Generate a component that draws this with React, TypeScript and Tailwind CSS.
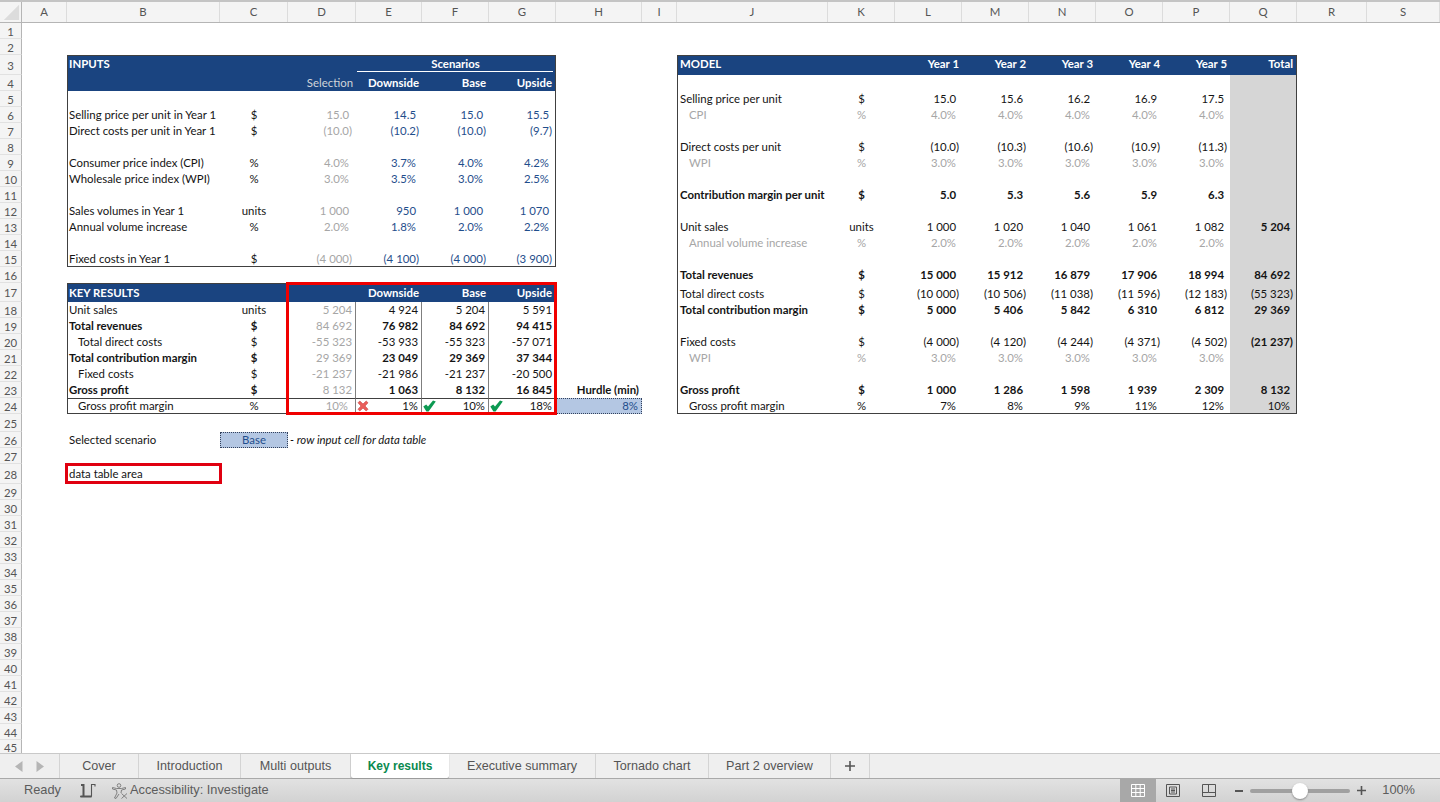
import React from 'react';

type Spec = { t?: string; c?: string; icon?: 'x' | 'check' };
type RowCells = Record<string, Spec>;

const COLS = ['A', 'B', 'C', 'D', 'E', 'F', 'G', 'H', 'I', 'J', 'K', 'L', 'M', 'N', 'O', 'P', 'Q', 'R', 'S'];
const GRID = 'grid grid-cols-[22px_45px_153px_68px_68px_66px_67px_67px_86px_35px_151px_67px_67px_67px_67px_67px_67px_67px_70px_73px]';

const HEIGHTS: Record<number, string> = { 3: 'h-[20px]', 17: 'h-[19px]', 25: 'h-[18px]', 28: 'h-[20px]', 45: 'h-[13px]' };

const HEAD = 'bg-[#1a4480] text-white font-bold';
const GREY = 'text-[#a6a6a6]';
const BLUE = 'text-[#1f4e8c]';
const BOLD = 'font-bold';

const lab = (t: string, c = ''): Spec => ({ t, c: `justify-start pl-[1px] ${c}` });
const labJ = (t: string, c = ''): Spec => ({ t, c: `justify-start pl-[2px] ${c}` });
const free = (t: string, c = ''): Spec => ({ t, c: `justify-start pl-[2px] ${c}` });
const ind = (t: string, c = ''): Spec => ({ t, c: `justify-start pl-[10px] ${c}` });
const indJ = (t: string, c = ''): Spec => ({ t, c: `justify-start pl-[11px] ${c}` });
const mid = (t: string, c = ''): Spec => ({ t, c: `justify-center ${c}` });
// right aligned, flush with the cell edge
const num = (t: string, c = ''): Spec => ({ t, c: `justify-end pr-[3px] ${c}` });
// right aligned, leaves room for a closing bracket like the excel number format
const fmt = (t: string, c = ''): Spec => ({ t, c: `justify-end ${t.endsWith(')') ? 'pr-[3px]' : 'pr-[6px]'} ${c}` });
const fmtD = (t: string, c = ''): Spec => ({ t, c: `justify-end ${t.endsWith(')') ? 'pr-[4px]' : 'pr-[7px]'} ${c}` });

const years = (vals: string[], c = '') => ({
  L: fmt(vals[0], c),
  M: fmt(vals[1], c),
  N: fmt(vals[2], c),
  O: fmt(vals[3], c),
  P: fmt(vals[4], c),
});

const inputRow = (label: string, unit: string, vals: string[]): RowCells => ({
  B: lab(label),
  C: mid(unit),
  D: fmtD(vals[0], GREY),
  E: fmt(vals[1], BLUE),
  F: fmt(vals[2], BLUE),
  G: fmt(vals[3], BLUE),
});

const resultRow = (label: Spec, unit: string, vals: string[], bold = false): RowCells => ({
  B: label,
  C: mid(unit, bold ? BOLD : ''),
  D: num(vals[0], GREY),
  E: num(vals[1], bold ? BOLD : ''),
  F: num(vals[2], bold ? BOLD : ''),
  G: num(vals[3], bold ? BOLD : ''),
});

const LEFT: Record<number, RowCells> = {
  3: {
    B: lab('INPUTS', HEAD),
    C: { c: HEAD },
    D: { c: HEAD },
    E: { c: HEAD },
    F: mid('Scenarios', HEAD),
    G: { c: HEAD },
  },
  4: {
    B: { c: HEAD },
    C: { c: HEAD },
    D: num('Selection', 'bg-[#1a4480] text-[#d0d4da]'),
    E: num('Downside', HEAD),
    F: num('Base', HEAD),
    G: num('Upside', HEAD),
  },
  6: inputRow('Selling price per unit in Year 1', '$', ['15.0', '14.5', '15.0', '15.5']),
  7: inputRow('Direct costs per unit in Year 1', '$', ['(10.0)', '(10.2)', '(10.0)', '(9.7)']),
  9: inputRow('Consumer price index (CPI)', '%', ['4.0%', '3.7%', '4.0%', '4.2%']),
  10: inputRow('Wholesale price index (WPI)', '%', ['3.0%', '3.5%', '3.0%', '2.5%']),
  12: inputRow('Sales volumes in Year 1', 'units', ['1 000', '950', '1 000', '1 070']),
  13: inputRow('Annual volume increase', '%', ['2.0%', '1.8%', '2.0%', '2.2%']),
  15: inputRow('Fixed costs in Year 1', '$', ['(4 000)', '(4 100)', '(4 000)', '(3 900)']),
  17: {
    B: lab('KEY RESULTS', HEAD),
    C: { c: HEAD },
    D: { c: HEAD },
    E: num('Downside', HEAD),
    F: num('Base', HEAD),
    G: num('Upside', HEAD),
  },
  18: resultRow(lab('Unit sales'), 'units', ['5 204', '4 924', '5 204', '5 591']),
  19: resultRow(lab('Total revenues', BOLD), '$', ['84 692', '76 982', '84 692', '94 415'], true),
  20: resultRow(ind('Total direct costs'), '$', ['-55 323', '-53 933', '-55 323', '-57 071']),
  21: resultRow(lab('Total contribution margin', BOLD), '$', ['29 369', '23 049', '29 369', '37 344'], true),
  22: resultRow(ind('Fixed costs'), '$', ['-21 237', '-21 986', '-21 237', '-20 500']),
  23: {
    ...resultRow(lab('Gross profit', BOLD), '$', ['8 132', '1 063', '8 132', '16 845'], true),
    H: num('Hurdle (min)', BOLD),
  },
  24: {
    B: ind('Gross profit margin'),
    C: mid('%'),
    D: { t: '10%', c: `justify-end pr-[7px] ${GREY}` },
    E: { t: '1%', icon: 'x', c: 'justify-between pr-[3px]' },
    F: { t: '10%', icon: 'check', c: 'justify-between pr-[3px]' },
    G: { t: '18%', icon: 'check', c: 'justify-between pr-[3px]' },
    H: num('8%', `${BLUE} bg-[#b4c7e3] border border-dotted border-[#33415c]`),
  },
  26: {
    B: free('Selected scenario'),
    C: mid('Base', `${BLUE} bg-[#b4c7e3] border border-dotted border-[#33415c]`),
    D: free('- row input cell for data table', 'italic'),
  },
  28: { B: free('data table area') },
};

const MODEL: Record<number, RowCells> = {
  3: {
    J: labJ('MODEL', HEAD),
    K: { c: HEAD },
    L: num('Year 1', HEAD),
    M: num('Year 2', HEAD),
    N: num('Year 3', HEAD),
    O: num('Year 4', HEAD),
    P: num('Year 5', HEAD),
    Q: num('Total', HEAD),
  },
  5: { J: labJ('Selling price per unit'), K: mid('$'), ...years(['15.0', '15.6', '16.2', '16.9', '17.5']) },
  6: { J: indJ('CPI', GREY), K: mid('%', GREY), ...years(['4.0%', '4.0%', '4.0%', '4.0%', '4.0%'], GREY) },
  8: { J: labJ('Direct costs per unit'), K: mid('$'), ...years(['(10.0)', '(10.3)', '(10.6)', '(10.9)', '(11.3)']) },
  9: { J: indJ('WPI', GREY), K: mid('%', GREY), ...years(['3.0%', '3.0%', '3.0%', '3.0%', '3.0%'], GREY) },
  11: { J: labJ('Contribution margin per unit', BOLD), K: mid('$', BOLD), ...years(['5.0', '5.3', '5.6', '5.9', '6.3'], BOLD) },
  13: { J: labJ('Unit sales'), K: mid('units'), ...years(['1 000', '1 020', '1 040', '1 061', '1 082']), Q: fmt('5 204', BOLD) },
  14: { J: indJ('Annual volume increase', GREY), K: mid('%', GREY), ...years(['2.0%', '2.0%', '2.0%', '2.0%', '2.0%'], GREY) },
  16: { J: labJ('Total revenues', BOLD), K: mid('$', BOLD), ...years(['15 000', '15 912', '16 879', '17 906', '18 994'], BOLD), Q: fmt('84 692', BOLD) },
  17: { J: labJ('Total direct costs', 'pt-[3px]'), K: mid('$', 'pt-[3px]'), ...years(['(10 000)', '(10 506)', '(11 038)', '(11 596)', '(12 183)'], 'pt-[3px]'), Q: fmt('(55 323)', 'pt-[3px]') },
  18: { J: labJ('Total contribution margin', BOLD), K: mid('$', BOLD), ...years(['5 000', '5 406', '5 842', '6 310', '6 812'], BOLD), Q: fmt('29 369', BOLD) },
  20: { J: labJ('Fixed costs'), K: mid('$'), ...years(['(4 000)', '(4 120)', '(4 244)', '(4 371)', '(4 502)']), Q: fmt('(21 237)', BOLD) },
  21: { J: indJ('WPI', GREY), K: mid('%', GREY), ...years(['3.0%', '3.0%', '3.0%', '3.0%', '3.0%'], GREY) },
  23: { J: labJ('Gross profit', BOLD), K: mid('$', BOLD), ...years(['1 000', '1 286', '1 598', '1 939', '2 309'], BOLD), Q: fmt('8 132', BOLD) },
  24: { J: indJ('Gross profit margin'), K: mid('%'), ...years(['7%', '8%', '9%', '11%', '12%']), Q: fmt('10%') },
};

const LINE = 'border-[#404040]';

// outline + inner rules of the three tables, as excel would store them per cell
const frame = (r: number, col: string) => {
  const out: string[] = [];
  const inLeftTop = r >= 3 && r <= 15;
  const inLeftBottom = r >= 17 && r <= 24;
  const inModel = r >= 3 && r <= 24;
  if ((inLeftTop || inLeftBottom) && col === 'B') out.push('border-l', LINE);
  if ((inLeftTop || inLeftBottom) && col === 'G') out.push('border-r', LINE);
  if (inModel && col === 'J') out.push('border-l', LINE);
  if (inModel && col === 'Q') out.push('border-r', LINE);
  const leftCol = ['B', 'C', 'D', 'E', 'F', 'G'].includes(col);
  const modelCol = ['J', 'K', 'L', 'M', 'N', 'O', 'P', 'Q'].includes(col);
  if (leftCol && (r === 3 || r === 17)) out.push('border-t', LINE);
  if (leftCol && (r === 15 || r === 24)) out.push('border-b', LINE);
  if (leftCol && r === 24) out.push('border-t');
  if (modelCol && r === 3) out.push('border-t', LINE);
  if (modelCol && r === 24) out.push('border-b', LINE);
  if (r >= 18 && r <= 24 && (col === 'D' || col === 'E' || col === 'F')) out.push('border-r border-r-[#7f7f7f]');
  if (col === 'Q' && r >= 4 && r <= 24) out.push('bg-[#d6d6d6]');
  return out.join(' ');
};

// cells are vertically nudged: excel bottom-aligns, the tall and bordered rows differ
const SHIFT: Record<number, string> = { 3: 'pb-[3px]', 15: '', 17: '', 24: '', 28: '' };

const CrossIcon = () => (
  <svg viewBox="0 0 12 12" className="ml-[1px] h-[12px] w-[12px]">
    <path d="M1 2.8 L2.8 1 L6 4 L9.2 1 L11 2.8 L8 6 L11 9.2 L9.2 11 L6 8 L2.8 11 L1 9.2 L4 6 Z" fill="#ea5f5c" stroke="#c8413e" strokeWidth="0.6" />
  </svg>
);

const CheckIcon = () => (
  <svg viewBox="0 0 13 12" className="ml-[1px] h-[12px] w-[13px]">
    <path d="M0.3 6.6 L3.2 4.6 L5 6.6 L10 0.4 L12.8 1.6 L5.6 11.4 L3.4 11.4 Z" fill="#0c9a52" />
  </svg>
);

const Cell: React.FC<{ r: number; col: string; spec?: Spec }> = ({ r, col, spec }) => (
  <div className={`flex min-w-0 items-center whitespace-nowrap ${SHIFT[r] ?? 'pb-[1px]'} ${frame(r, col)} ${spec?.c ?? ''}`}>
    {spec?.icon === 'x' && <CrossIcon />}
    {spec?.icon === 'check' && <CheckIcon />}
    {spec?.t && <span>{spec.t}</span>}
  </div>
);

const Row: React.FC<{ r: number }> = ({ r }) => {
  const cells = { ...(LEFT[r] ?? {}), ...(MODEL[r] ?? {}) };
  return (
    <div className={`${GRID} ${HEIGHTS[r] ?? 'h-[16px]'} shrink-0`}>
      <div className="flex items-center justify-center border-r border-b border-r-[#b5b5b5] border-b-[#e1e1e1] bg-[#f4f4f4] pt-[2px] text-[#555]">{r}</div>
      {COLS.map(col => (
        <Cell key={col} r={r} col={col} spec={cells[col]} />
      ))}
    </div>
  );
};

const ColumnHeader = () => (
  <div className={`${GRID} h-[23px] shrink-0 border-t-2 border-b border-t-[#c4c4c4] border-b-[#b5b5b5] bg-[#f4f4f4] text-[#555]`}>
    <div className="relative border-r border-[#b5b5b5]">
      <svg viewBox="0 0 22 21" className="absolute inset-0 h-full w-full">
        <path d="M20 3 L20 19 L4 19 Z" fill="#dcdcdc" />
      </svg>
    </div>
    {COLS.map(col => (
      <div key={col} className="flex items-center justify-center border-r border-[#dcdcdc]">{col}</div>
    ))}
  </div>
);

const TABS = [
  { name: 'Cover', w: 'w-[79px]' },
  { name: 'Introduction', w: 'w-[102px]' },
  { name: 'Multi outputs', w: 'w-[110px]' },
  { name: 'Key results', w: 'w-[98px]', active: true },
  { name: 'Executive summary', w: 'w-[147px]' },
  { name: 'Tornado chart', w: 'w-[113px]' },
  { name: 'Part 2 overview', w: 'w-[122px]' },
];

const TabBar = () => (
  <div className="flex h-[26px] shrink-0 border-t border-b border-t-[#c9c9c9] border-b-[#a9a9a9] bg-[#efefef] font-['Liberation_Sans',sans-serif] text-[12.6px] text-[#555]">
    <div className="flex w-[60px] items-center gap-[13px] border-r border-[#d4d4d4] pl-[15px]">
      <svg viewBox="0 0 8 11" className="h-[11px] w-[8px]"><path d="M7.5 0 L0 5.5 L7.5 11 Z" fill="#b5b5b5" /></svg>
      <svg viewBox="0 0 8 11" className="h-[11px] w-[8px]"><path d="M0.5 0 L8 5.5 L0.5 11 Z" fill="#b5b5b5" /></svg>
    </div>
    {TABS.map(tab => (
      <div
        key={tab.name}
        className={`flex items-center justify-center ${tab.w} ${
          tab.active ? 'rounded-b-[2px] bg-white text-[12px] font-bold text-[#0a8a4f] shadow-[0_1px_1px_#999]' : 'border-r border-[#d4d4d4]'
        }`}
      >
        {tab.name}
      </div>
    ))}
    <div className="flex w-[39px] items-center justify-center border-r border-[#d4d4d4]">
      <svg viewBox="0 0 12 12" className="h-[12px] w-[12px]"><path d="M6 1 V11 M1 6 H11" stroke="#555" strokeWidth="1.6" /></svg>
    </div>
  </div>
);

const StatusBar = () => (
  <div className="flex h-[23px] shrink-0 items-center bg-gradient-to-b from-[#e2e2e2] to-[#d2d2d2] font-['Liberation_Sans',sans-serif] text-[12.8px] text-[#5c5c5c]">
    <span className="ml-[24px] w-[56px]">Ready</span>
    <svg viewBox="0 0 16 15" className="h-[15px] w-[16px]" fill="none" stroke="#555">
      <path d="M1 2 H4 M3.5 1 V13" strokeWidth="2" />
      <path d="M1 13.5 H11" strokeWidth="2" strokeLinecap="round" />
      <path d="M11.5 13 V1.5 H15.5 M15 1 V3.5" strokeWidth="1.1" />
    </svg>
    <svg viewBox="0 0 16 16" className="ml-[16px] h-[16px] w-[16px]" fill="none" stroke="#777" strokeWidth="0.9">
      <circle cx="7" cy="2.5" r="1.8" />
      <path d="M0.5 4.5 L4.5 5.5 H9.5 L13.5 4.5 L13.5 6 L9.5 7 L9 10 M0.5 4.5 L0.5 6 L4.5 7 L5 10 L2.5 15 L4 15.5 L7 11 M9.5 10.5 L15 15.5 M15 10.5 L9.5 15.5" />
    </svg>
    <span className="ml-[2px]">Accessibility: Investigate</span>
    <div className="ml-auto flex h-full items-center">
      <div className="flex h-full w-[36px] items-center justify-center bg-[#a8a8a8]">
        <svg viewBox="0 0 14 13" className="h-[13px] w-[14px]" fill="none" stroke="#fff" strokeWidth="1">
          <path d="M0.5 0.5 H13.5 V12.5 H0.5 Z M0.5 4.5 H13.5 M0.5 8.5 H13.5 M4.8 0.5 V12.5 M9.2 0.5 V12.5" />
        </svg>
      </div>
      <svg viewBox="0 0 14 13" className="ml-[10px] h-[13px] w-[14px]" fill="none" stroke="#555" strokeWidth="1">
        <path d="M0.5 0.5 H13.5 V12.5 H0.5 Z M3.5 3 H10.5 V10 H3.5 Z M5 5 H9 M5 6.5 H9 M5 8 H9" />
      </svg>
      <svg viewBox="0 0 14 13" className="ml-[22px] h-[13px] w-[14px]" fill="none" stroke="#555" strokeWidth="1">
        <path d="M0.5 0.5 H13.5 V12.5 H0.5 Z M0.5 8.5 H6.5 V0.5 M6.5 8.5 H13.5" />
      </svg>
      <div className="ml-[19px] h-[2px] w-[8px] bg-[#555]" />
      <div className="relative ml-[7px] h-[4px] w-[100px] rounded-full bg-[#a0a0a0]">
        <div className="absolute top-[-6px] left-[42px] h-[16px] w-[16px] rounded-full bg-white shadow-[0_1px_2px_#888]" />
      </div>
      <svg viewBox="0 0 9 9" className="ml-[7px] h-[9px] w-[9px]"><path d="M4.5 0 V9 M0 4.5 H9" stroke="#555" strokeWidth="1.6" /></svg>
      <span className="mr-[25px] ml-[16px]">100%</span>
    </div>
  </div>
);

export default function App() {
  const rows = Array.from({ length: 45 }, (_, i) => i + 1);
  return (
    <div className="flex h-[802px] w-[1440px] flex-col overflow-hidden bg-white font-['Lato',sans-serif] text-[11.4px] leading-none text-[#141414]">
      <ColumnHeader />
      <div className="relative min-h-0 flex-1 overflow-hidden">
        {rows.map(r => (
          <Row key={r} r={r} />
        ))}
        {/* rule under "Scenarios", sits inside the header fill */}
        <div className="pointer-events-none absolute top-[48px] left-[357px] h-px w-[196px] bg-white" />
        {/* red selection frames */}
        <div className="pointer-events-none absolute top-[259px] left-[286px] h-[133px] w-[271px] border-[3px] border-[#f00000]" />
        <div className="pointer-events-none absolute top-[440px] left-[65px] h-[21px] w-[157px] border-[3px] border-[#e00010]" />
      </div>
      <TabBar />
      <StatusBar />
    </div>
  );
}
